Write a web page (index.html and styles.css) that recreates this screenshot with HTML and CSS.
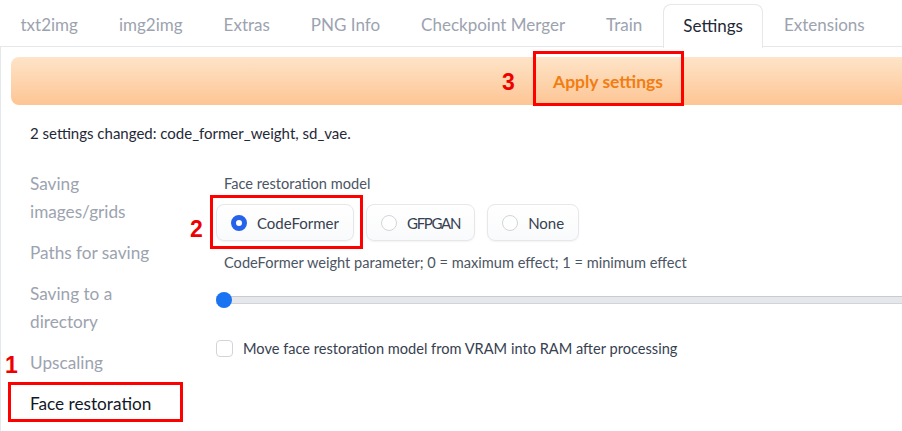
FILE: index.html
```html
<!DOCTYPE html>
<html lang="en">
<head>
<meta charset="utf-8">
<title>Settings</title>
<link rel="stylesheet" href="styles.css">
</head>
<body>
<div class="page">
  <nav class="tabs">
    <div class="tab">txt2img</div>
    <div class="tab">img2img</div>
    <div class="tab">Extras</div>
    <div class="tab">PNG Info</div>
    <div class="tab">Checkpoint Merger</div>
    <div class="tab">Train</div>
    <div class="tab tab-active">Settings</div>
    <div class="tab">Extensions</div>
  </nav>
  <section class="panel">
    <div class="apply-bar"><span class="apply-text">Apply settings</span></div>
    <p class="changed">2 settings changed: code_former_weight, sd_vae.</p>
    <div class="settings-row">
      <ul class="side-nav">
        <li>Saving<br>images/grids</li>
        <li>Paths for saving</li>
        <li>Saving to a<br>directory</li>
        <li>Upscaling</li>
        <li class="side-active">Face restoration</li>
      </ul>
      <div class="content">
        <div class="field-label">Face restoration model</div>
        <div class="radios">
          <label class="radio-opt"><span class="radio radio-on"></span>CodeFormer</label>
          <label class="radio-opt"><span class="radio"></span><span class="tight">GFPGAN</span></label>
          <label class="radio-opt"><span class="radio"></span>None</label>
        </div>
        <div class="field-label weight-label">CodeFormer weight parameter; 0 = maximum effect; 1 = minimum effect</div>
        <div class="slider"><span class="thumb"></span></div>
        <label class="check-row"><span class="checkbox"></span>Move face restoration model from VRAM into RAM after processing</label>
      </div>
    </div>
  </section>

  <div class="mark mark-apply"></div>
  <div class="num num-3">3</div>
  <div class="mark mark-code"></div>
  <div class="num num-2">2</div>
  <div class="mark mark-face"></div>
  <div class="num num-1">1</div>
</div>
</body>
</html>
```
FILE: styles.css
```css
html, body {
  margin: 0;
  padding: 0;
  background: #ffffff;
  overflow: hidden;
}
body {
  font-family: "Lato", "Liberation Sans", sans-serif;
  color: #1f2937;
}
.page {
  position: relative;
  width: 902px;
  height: 431px;
  overflow: hidden;
}
.tabs {
  display: flex;
  padding-top: 4px;
  height: 42px;
  border-bottom: 1px solid #e5e7eb;
}
.tab {
  padding: 0 20.5px;
  font-size: 17px;
  line-height: 42px;
  color: #9ca3af;
  white-space: nowrap;
}
.tab-active {
  color: #1f2937;
  background: #fff;
  border: 1px solid #e5e7eb;
  border-bottom: none;
  border-radius: 8px 8px 0 0;
  padding: 0 19.5px;
  margin-bottom: -1px;
  height: 43px;
  line-height: 41px;
}
.panel {
  border-left: 1px solid #e5e7eb;
  padding: 10px 0 0 10px;
  height: 400px;
}
.apply-bar {
  height: 48px;
  border-radius: 8px 0 0 8px;
  background: linear-gradient(to bottom, #fee4c8, #fdc594);
  display: flex;
  align-items: center;
  padding-left: 542px;
}
.apply-text {
  color: #f27d12;
  font-weight: 700;
  font-size: 17.5px;
}
.changed {
  margin: 18px 0 0 19px;
  font-size: 15px;
  line-height: 20px;
  color: #1f2937;
}
.settings-row {
  display: flex;
  margin-top: 27px;
}
.side-nav {
  list-style: none;
  margin: 0;
  padding: 0 0 0 19px;
  width: 186px;
  flex-shrink: 0;
}
.side-nav li {
  font-size: 17.2px;
  line-height: 28px;
  color: #9ca3af;
  margin-bottom: 13px;
}
.side-nav li.side-active {
  color: #111827;
  margin-top: 2px;
}
.content {
  padding-top: 4px;
  flex: 1;
  min-width: 700px;
}
.field-label {
  font-size: 14.6px;
  line-height: 20px;
  color: #4b5563;
  padding-left: 8px;
}
.radios {
  display: flex;
  gap: 12px;
  margin-top: 10px;
}
.radio-opt {
  display: flex;
  align-items: center;
  height: 35px;
  padding: 0 14px 0 14px;
  border: 1px solid #e5e7eb;
  border-radius: 8px;
  background: linear-gradient(to bottom, #ffffff, #f9fafb);
  box-shadow: 0 1px 2px rgba(0,0,0,0.05);
  font-size: 15px;
  color: #374151;
}
.tight {
  letter-spacing: -1.3px;
}
.radio {
  width: 16px;
  height: 16px;
  border-radius: 50%;
  border: 1px solid #d1d5db;
  box-sizing: border-box;
  background: #fff;
  margin-right: 10px;
}
.radio-on {
  border: 5px solid #2563eb;
}
.weight-label {
  margin-top: 12px;
}
.slider {
  position: relative;
  margin-top: 19px;
  height: 16px;
  display: flex;
  align-items: center;
}
.slider::before {
  content: "";
  display: block;
  width: 100%;
  height: 6px;
  background: #e5e7eb;
  border-top: 1px solid #c8ccd2;
  border-bottom: 1px solid #d1d5db;
}
.thumb {
  position: absolute;
  left: 0;
  top: 0;
  width: 16px;
  height: 16px;
  border-radius: 50%;
  background: #1a73f0;
}
.check-row {
  display: flex;
  align-items: center;
  margin-top: 32px;
  font-size: 14.6px;
  color: #374151;
}
.checkbox {
  width: 17px;
  height: 17px;
  box-sizing: border-box;
  border: 1px solid #d1d5db;
  border-radius: 4px;
  margin-right: 10px;
  background: #fff;
}
.mark {
  position: absolute;
  border: 3px solid #ff0000;
  box-sizing: border-box;
}
.num {
  position: absolute;
  color: #ee0000;
  font-weight: 700;
  font-size: 23px;
  line-height: 24px;
  font-family: "Liberation Sans", sans-serif;
}
.mark-apply { left: 533px; top: 51px; width: 151px; height: 55px; }
.num-3 { left: 502px; top: 70px; }
.mark-code { left: 210px; top: 195px; width: 153px; height: 54px; }
.num-2 { left: 190px; top: 217px; }
.mark-face { left: 8px; top: 382px; width: 175px; height: 40px; }
.num-1 { left: 5px; top: 353px; }
```
